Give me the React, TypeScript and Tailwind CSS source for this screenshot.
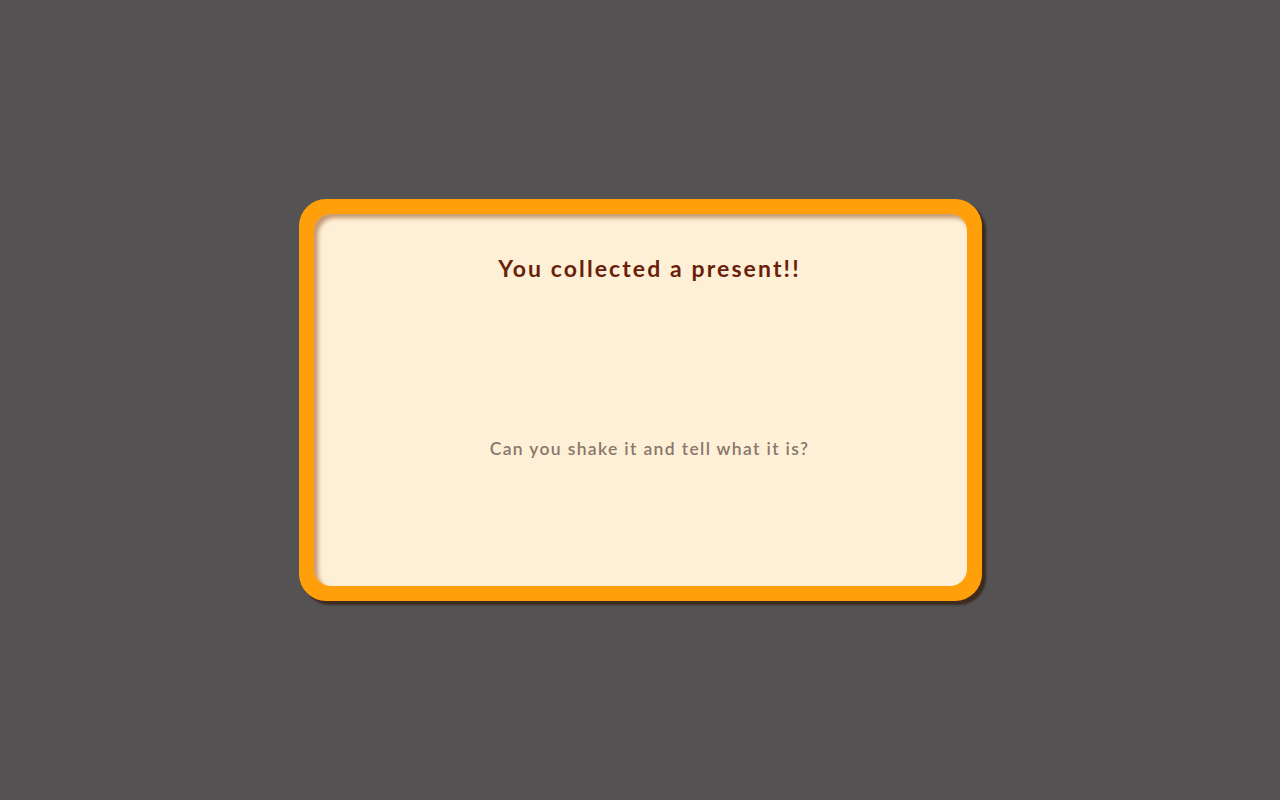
export default function App() {
  return (
    <div className="w-[1280px] h-[800px] bg-[#545253] flex items-center justify-center" style={{ fontFamily: '"Lato", "Open Sans", sans-serif' }}>
      <div className="ml-[1px] w-[683px] h-[402px] rounded-[27px] bg-[#ffa00b] p-[15px] shadow-[4px_4px_2px_#3e2b20]">
        <div className="w-full h-full rounded-[17px] bg-[#fef0d6] shadow-[inset_4px_4px_4px_rgba(150,80,30,0.55)] flex flex-col items-center pl-[18px]">
          <div className="mt-[39px] text-[23px] font-bold tracking-[2.1px] text-[#6a1f0b] leading-[30px]">You collected a present!!</div>
          <div className="flex-1 flex items-center justify-center pt-[28px]">
            <div className="text-[17.5px] font-semibold tracking-[1.35px] text-[#8b776c] leading-[24px]">Can you shake it and tell what it is?</div>
          </div>
        </div>
      </div>
    </div>
  );
}
